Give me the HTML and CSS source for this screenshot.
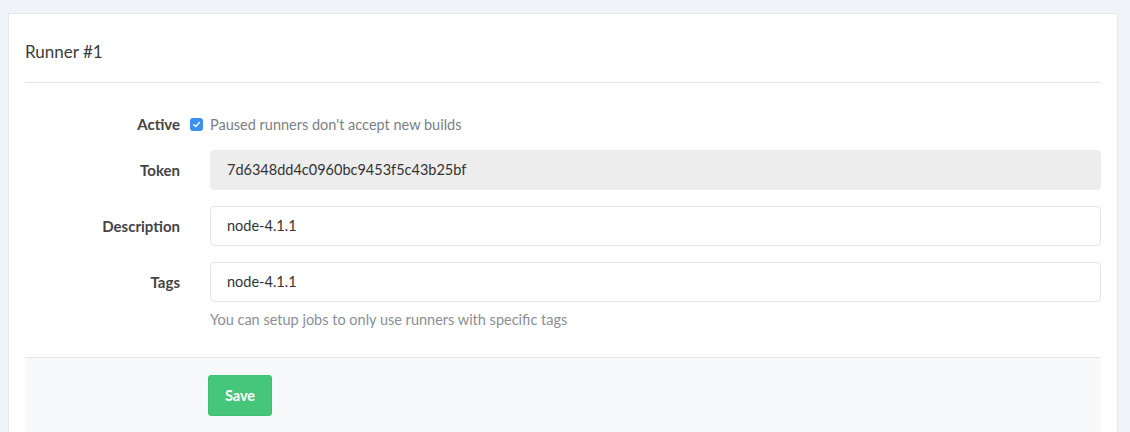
FILE: index.html
```html
<!DOCTYPE html>
<html>
<head>
<meta charset="utf-8">
<link rel="stylesheet" href="styles.css">
</head>
<body>
<div class="page">
  <div class="card">
    <div class="card-head">
      <h3 class="title">Runner #1</h3>
    </div>
    <form class="form">
      <div class="row row-check">
        <label class="label">Active</label>
        <div class="field check-field">
          <span class="checkbox">
            <svg width="9" height="9" viewBox="0 0 10 10"><path d="M2 5.2 L4.2 7.3 L8.2 2.8" fill="none" stroke="#fff" stroke-width="1.6" stroke-linecap="round" stroke-linejoin="round"/></svg>
          </span>
          <span class="check-text">Paused runners don't accept new builds</span>
        </div>
      </div>
      <div class="row">
        <label class="label">Token</label>
        <div class="field"><div class="input readonly">7d6348dd4c0960bc9453f5c43b25bf</div></div>
      </div>
      <div class="row">
        <label class="label">Description</label>
        <div class="field"><div class="input">node-4.1.1</div></div>
      </div>
      <div class="row">
        <label class="label">Tags</label>
        <div class="field">
          <div class="input">node-4.1.1</div>
          <p class="help">You can setup jobs to only use runners with specific tags</p>
        </div>
      </div>
      <div class="actions">
        <button type="button" class="btn-save">Save</button>
      </div>
    </form>
  </div>
</div>
</body>
</html>
```

FILE: styles.css
```css
* { box-sizing: border-box; }
html, body { margin: 0; padding: 0; }
body {
  background: #f0f3f7;
  font-family: "Lato", "Open Sans", sans-serif;
  color: #333;
  font-size: 14.5px;
  overflow: hidden;
}
.page {
  padding: 13px 12px 0 8px;
}
.card {
  background: #fff;
  border: 1px solid #e5e7ea;
  border-bottom: none;
  padding: 0 16px;
  height: 419px;
  overflow: hidden;
}
.card-head {
  border-bottom: 1px solid #e5e5e5;
  height: 69px;
  display: flex;
  align-items: center;
}
.title {
  margin: 0;
  font-size: 17px;
  font-weight: 400;
  color: #3c3c3c;
  padding-top: 6px;
}
.form {
  padding-top: 31px;
}
.row {
  display: grid;
  grid-template-columns: 170px 1fr;
  margin-bottom: 16px;
}
.label {
  text-align: right;
  padding-right: 15px;
  font-weight: 700;
  font-size: 15px;
  color: #444;
  line-height: 40px;
}
.row-check { margin-bottom: 16px; }
.row-check .label { line-height: 20px; }
.field { padding-left: 15px; }
.check-field {
  display: flex;
  align-items: center;
  margin-left: -20px;
  height: 20px;
}
.checkbox {
  width: 13px;
  height: 13px;
  border-radius: 3px;
  background: #3b8ff0;
  display: inline-flex;
  align-items: center;
  justify-content: center;
  margin-right: 7px;
}
.check-text { color: #7a7f87; }
.input {
  height: 40px;
  border: 1px solid #e5e5e5;
  border-radius: 4px;
  padding: 0 16px;
  line-height: 38px;
  color: #333;
  background: #fff;
}
.input.readonly {
  background: #ededed;
  border-color: #ededed;
}
.help {
  margin: 8px 0 0;
  color: #8a8f96;
  line-height: 20px;
}
.actions {
  margin-top: 27px;
  border-top: 1px solid #e5e5e5;
  background: #f8f9fb;
  padding: 17px 0 0 183px;
  height: 76px;
}
.btn-save {
  font-family: inherit;
  font-weight: 700;
  font-size: 14.5px;
  color: #fff;
  background: #45c67a;
  border: 1px solid #3fbf72;
  border-radius: 3px;
  width: 64px;
  height: 41px;
  padding: 0;
}
```
